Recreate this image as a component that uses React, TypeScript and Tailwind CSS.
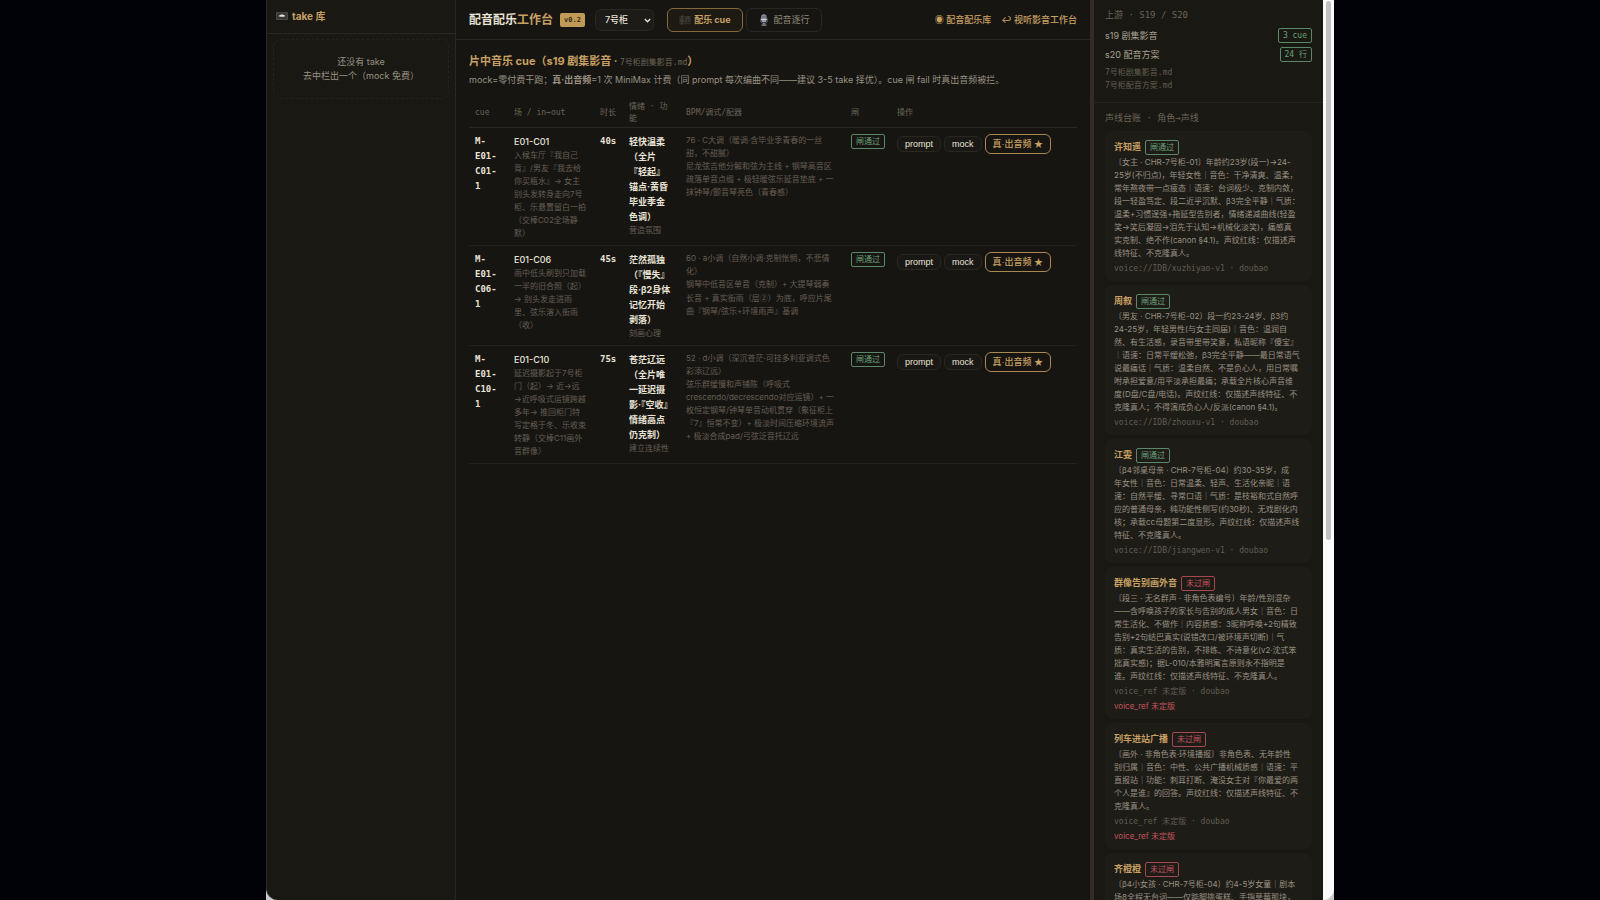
import type { ReactNode } from "react";
import clsx from "clsx";

const sans = "font-['Inter','Noto_Sans_CJK_SC',sans-serif]";
const mono = "font-['DejaVu_Sans_Mono','Noto_Sans_CJK_SC',monospace]";
const buttonFont = "font-['Liberation_Sans','Noto_Sans_CJK_SC',sans-serif]";

interface Cue {
  id: string;
  scene: string;
  inOut: string;
  duration: string;
  mood: string;
  purpose: string;
  music: string;
}

interface Voice {
  name: string;
  passed: boolean;
  desc: string;
  voiceRef: string | null;
}

const cues: Cue[] = [
  {
    id: "M-\nE01-\nC01-\n1",
    scene: "E01-C01",
    inOut: "入候车厅『我自己\n背』/男友『我去给\n你买瓶水』→ 女主\n别头发转身走向7号\n柜、乐悬置留白一拍\n（交棒C02全场静\n默）",
    duration: "40s",
    mood: "轻快温柔\n（全片\n『轻起』\n锚点·黄昏\n毕业季金\n色调）",
    purpose: "营造氛围",
    music:
      "76 · C大调（暖调·含毕业季青春的一丝\n甜，不甜腻）\n尼龙弦吉他分解和弦为主线 + 钢琴高音区\n疏落单音点缀 + 极轻暖弦乐延音垫底 + 一\n抹钟琴/颤音琴亮色（青春感）",
  },
  {
    id: "M-\nE01-\nC06-\n1",
    scene: "E01-C06",
    inOut: "雨中低头刷到只加载\n一半的旧合照（起）\n→ 别头发走进雨\n里、弦乐溶入街雨\n（收）",
    duration: "45s",
    mood: "茫然孤独\n（『慢失』\n段·β2身体\n记忆开始\n剥落）",
    purpose: "刻画心理",
    music:
      "60 · a小调（自然小调·克制怅惘，不悲情\n化）\n钢琴中低音区单音（克制）+ 大提琴弱奏\n长音 + 真实街雨（层②）为底，呼应片尾\n曲『钢琴/弦乐+环境雨声』基调",
  },
  {
    id: "M-\nE01-\nC10-\n1",
    scene: "E01-C10",
    inOut: "延迟摄影起于7号柜\n门（起）→ 近→远\n→近呼吸式运镜跨越\n多年→ 推回柜门特\n写定格于冬、乐收束\n转静（交棒C11画外\n音群像）",
    duration: "75s",
    mood: "苍茫辽远\n（全片唯\n一延迟摄\n影·『空收』\n情绪高点\n仍克制）",
    purpose: "建立连续性",
    music:
      "52 · d小调（深沉苍茫·可挂多利亚调式色\n彩添辽远）\n弦乐群缓慢和声铺陈（呼吸式\ncrescendo/decrescendo对应运镜）+ 一\n枚恒定钢琴/钟琴单音动机贯穿（象征柜上\n『7』恒常不变）+ 极淡时间压缩环境流声\n+ 极淡合成pad/弓弦泛音托辽远",
  },
];

const voices: Voice[] = [
  {
    name: "许知遥",
    passed: true,
    desc: "〔女主 · CHR-7号柜-01〕年龄约23岁(段一)→24-\n25岁(不归点)，年轻女性｜音色：干净清爽、温柔，\n常年熬夜带一点疲态｜语速：台词极少、克制内敛，\n段一轻盈笃定、段二近乎沉默、β3完全平静｜气质：\n温柔+习惯逞强+拖延型告别者，情绪递减曲线(轻盈\n笑→笑后凝固→泪先于认知→机械化淡笑)，痛感真\n实克制、绝不作(canon §4.1)。声纹红线：仅描述声\n线特征、不克隆真人。",
    voiceRef: "voice://IDB/xuzhiyao-v1",
  },
  {
    name: "周叙",
    passed: true,
    desc: "〔男友 · CHR-7号柜-02〕段一约23-24岁、β3约\n24-25岁，年轻男性(与女主同届)｜音色：温润自\n然、有生活感，录音带里带笑意，私语昵称『傻宝』\n｜语速：日常平缓松弛，β3完全平静——最日常语气\n说最痛话｜气质：温柔自然、不是负心人，用日常嘱\n咐承担爱意/用平淡承担最痛；承载全片核心声音维\n度(D盘/C盘/电话)。声纹红线：仅描述声线特征、不\n克隆真人；不得演成负心人/反派(canon §4.1)。",
    voiceRef: "voice://IDB/zhouxu-v1",
  },
  {
    name: "江雯",
    passed: true,
    desc: "〔β4邻桌母亲 · CHR-7号柜-04〕约30-35岁，成\n年女性｜音色：日常温柔、轻声、生活化亲昵｜语\n速：自然平缓、寻常口语｜气质：是枝裕和式自然呼\n应的普通母亲，纯功能性侧写(约30秒)、无戏剧化内\n核；承载cc母题第二度显形。声纹红线：仅描述声线\n特征、不克隆真人。",
    voiceRef: "voice://IDB/jiangwen-v1",
  },
  {
    name: "群像告别画外音",
    passed: false,
    desc: "〔段三 · 无名群声 · 非角色表编号〕年龄/性别混杂\n——含呼唤孩子的家长与告别的成人男女｜音色：日\n常生活化、不做作｜内容质感：3昵称呼唤+2句精致\n告别+2句结巴真实(说错改口/被环境声切断)｜气\n质：真实生活的告别，不排练、不诗意化(v2·沈式笨\n拙真实感)；据L-010/本雅明寓言原则永不指明是\n谁。声纹红线：仅描述声线特征、不克隆真人。",
    voiceRef: null,
  },
  {
    name: "列车进站广播",
    passed: false,
    desc: "〔画外 · 非角色表·环境播报〕非角色表、无年龄性\n别归属｜音色：中性、公共广播机械质感｜语速：平\n直报站｜功能：刺耳打断、淹没女主对『你最爱的两\n个人是谁』的回答。声纹红线：仅描述声线特征、不\n克隆真人。",
    voiceRef: null,
  },
  {
    name: "齐橙橙",
    passed: false,
    desc: "〔β4小女孩 · CHR-7号柜-04〕约4-5岁女童｜剧本\n场8全程无台词——仅踮脚挑蛋糕、手指草莓那块，",
    voiceRef: null,
  },
];

function Badge({ tone, className, children }: { tone: "ok" | "bad"; className?: string; children: ReactNode }) {
  return (
    <span
      className={clsx(
        "inline-block shrink-0 whitespace-nowrap rounded-xs border px-1 text-[8px] leading-[13px]",
        tone === "ok" ? "border-[#5a8767] text-[#6ba27a]" : "border-[#a5484f] text-[#c2545c]",
        className
      )}
    >
      {children}
    </span>
  );
}

function TapeIcon() {
  return (
    <svg className="h-3 w-3" viewBox="0 0 12 12" aria-hidden="true">
      <rect x="0" y="2" width="12" height="8" rx="0.8" fill="#4b4a47" />
      <rect x="0.8" y="2.7" width="10.4" height="6.4" fill="#383735" />
      <path d="M2.4 6l1.800-1 1-.6h1.600l1 .6 1.800 1-1.800.8H4.200z" fill="#e6e3dc" />
    </svg>
  );
}

function ScoreIcon() {
  return (
    <svg className="h-3 w-3" viewBox="0 0 12 12" fill="none" stroke="#4a4741" aria-hidden="true">
      <path d="M0 2.5h12M0 4.3h12M0 6.1h12M0 7.9h12M0 9.7h12" strokeWidth="0.5" />
      <path d="M3 10.6c-1.3 0-1.2-1.3-.4-1.3M3 10.6V2.2c0-1.4 1.3-1 .9.3C3.5 4 1.3 5 1.5 6.8c.2 1.6 3.2 1.5 3.1-.1-.1-1.2-1.9-1.1-1.9.1" strokeWidth="0.8" />
      <path d="M7 8.5V4l3-.8v4.6" strokeWidth="1" />
    </svg>
  );
}

function MicIcon() {
  return (
    <svg className="h-3 w-3" viewBox="0 0 12 12" aria-hidden="true">
      <path d="M2.7 4.5v2.2c0 4 6.600 4 6.600 0V4.5" fill="none" stroke="#5d6068" strokeWidth="1" />
      <rect x="3.2" y="0.2" width="5.400" height="8.2" rx="2.700" fill="#9aa0ac" />
      <path d="M4 2.4h4M3.500 3.900h4.900M5 .8v4M6.900 .8v4" stroke="#4f5665" strokeWidth="0.5" />
      <rect x="3.2" y="4.900" width="5.400" height="1" fill="#d3d7de" />
      <path d="M5.300 9h1.400v1.500h1.800v1.200h-5v-1.200h1.800z" fill="#878b94" />
    </svg>
  );
}

function TakeLibrary() {
  return (
    <aside className="w-[190px] shrink-0 rounded-bl-xl border-x border-[#2a2721] bg-[#191812]">
      <h2 className="flex h-[34px] items-center gap-1 border-b border-[#2a2721] px-[9px] pb-px text-[10px] font-bold text-[#c7a063]">
        <TapeIcon />
        take 库
      </h2>
      <div className="mx-[6px] mt-[5px] rounded-lg border border-dashed border-[#26231d] py-[15px] text-center text-[9px] leading-[14px] text-[#999285]">
        <p>还没有 take</p>
        <p>去中栏出一个（mock 免费）</p>
      </div>
    </aside>
  );
}

function TopBar() {
  return (
    <header className="flex h-10 items-center border-b border-[#2a2721] px-[13px]">
      <h1 className="text-[12px] font-bold whitespace-nowrap text-[#e9e3d6]">
        配音配乐<span className="text-[#c7a063]">工作台</span>
      </h1>
      <span className={clsx(mono, "ml-[7px] rounded-xs bg-[#c19a58] px-1 text-[7px] leading-[14px] font-bold text-[#3a2d17]")}>
        v0.2
      </span>
      <div className="relative ml-[10px]">
        <select
          aria-label="剧集"
          className="block h-[22px] w-[59px] appearance-none rounded-md border border-[#2a2721] bg-[#1d1b17] pl-[9px] text-[9px] font-medium text-[#e9e3d6]"
        >
          <option>7号柜</option>
        </select>
        <svg
          className="pointer-events-none absolute top-2 right-[3px] h-[7px] w-[7px]"
          viewBox="0 0 7 7"
          fill="none"
          stroke="#e9e3d6"
          strokeWidth="1.3"
          aria-hidden="true"
        >
          <path d="M0.8 2l2.7 2.8L6.2 2" />
        </svg>
      </div>
      <nav className="ml-[13px] flex gap-[3px] text-[9px]">
        <button className="flex h-6 w-[76px] items-center justify-center gap-[3px] rounded-md border border-[#84693c] bg-[#1d1a14] font-bold text-[#c7a063]">
          <ScoreIcon />
          配乐 cue
        </button>
        <button className="flex h-6 w-[76px] items-center justify-center gap-[3px] rounded-md border border-[#2a2721] text-[#8f8878]">
          <MicIcon />
          配音逐行
        </button>
      </nav>
      <div className="ml-auto flex gap-[10px] text-[9px] font-medium whitespace-nowrap text-[#c7a063]">
        <a href="#library">◉ 配音配乐库</a>
        <a href="#studio">↩ 视听影音工作台</a>
      </div>
    </header>
  );
}

// Inter draws circled digits larger than the text around them.
function MusicNote({ text }: { text: string }) {
  const [before, after] = text.split("②");
  if (after === undefined) return <>{text}</>;
  return (
    <>
      {before}
      <span className="font-['Noto_Sans_CJK_SC',sans-serif]">②</span>
      {after}
    </>
  );
}

function CueTable() {
  return (
    <table className="mt-[9px] w-full table-fixed border-collapse text-left">
      <colgroup>
        <col className="w-[39px]" />
        <col className="w-[86px]" />
        <col className="w-[29px]" />
        <col className="w-[57px]" />
        <col className="w-[165px]" />
        <col className="w-[46px]" />
        <col />
      </colgroup>
      <thead>
        <tr className={clsx(mono, "border-b border-[#2a2721] text-[8px] leading-3 text-[#6b6457] [&>th]:px-[6px] [&>th]:pt-1 [&>th]:pb-[2px] [&>th]:font-normal")}>
          <th scope="col">cue</th>
          <th scope="col" className="whitespace-nowrap">场 / in→out</th>
          <th scope="col" className="whitespace-nowrap">时长</th>
          <th scope="col" className="whitespace-pre">{"情绪 · 功\n能"}</th>
          <th scope="col">BPM/调式/配器</th>
          <th scope="col">闸</th>
          <th scope="col">操作</th>
        </tr>
      </thead>
      <tbody>
        {cues.map((cue) => (
          <tr
            key={cue.scene}
            className="border-b border-[#23211c] align-top text-[9px] leading-[15px] text-[#e9e3d6] [&>td]:px-[6px] [&>td]:pt-[6px] [&>td]:pb-[5px]"
          >
            <td className={clsx(mono, "font-bold whitespace-pre")}>{cue.id}</td>
            <td className="whitespace-pre">
              <div className="font-medium">{cue.scene}</div>
              <div className="text-[8px] leading-[13px] text-[#655e52]">{cue.inOut}</div>
            </td>
            <td className={clsx(mono, "font-bold")}>{cue.duration}</td>
            <td className="whitespace-pre">
              <div className="font-bold">{cue.mood}</div>
              <div className="text-[8px] leading-[13px] text-[#655e52]">{cue.purpose}</div>
            </td>
            <td className="text-[8px] leading-[13px] whitespace-pre text-[#655e52]">
              <MusicNote text={cue.music} />
            </td>
            <td>
              <Badge tone="ok" className="align-top">闸通过</Badge>
            </td>
            <td>
              <div className={clsx(buttonFont, "flex items-center gap-[3px] leading-[14px] whitespace-nowrap")}>
                <button className="rounded-md border border-[#2a2721] bg-[#1a1815] px-[7px]">prompt</button>
                <button className="rounded-md border border-[#2a2721] bg-[#1a1815] px-[7px]">mock</button>
                <button className="rounded-md border border-[#a98750] px-[7px] py-[2px] font-medium text-[#c7a063]">
                  真·出音频 ★
                </button>
              </div>
            </td>
          </tr>
        ))}
      </tbody>
    </table>
  );
}

function VoiceCard({ voice }: { voice: Voice }) {
  return (
    <li className="rounded-lg bg-[#1e1c17] px-[9px] pt-2 pb-[6px]">
      <div className="mb-px flex h-4 items-center gap-1">
        <h3 className="text-[9px] font-bold text-[#c7a063]">{voice.name}</h3>
        <Badge tone={voice.passed ? "ok" : "bad"}>{voice.passed ? "闸通过" : "未过闸"}</Badge>
      </div>
      <p className="text-[8px] leading-[13px] whitespace-pre text-[#999182]">{voice.desc}</p>
      <p className={clsx(mono, "mt-[2px] text-[8px] leading-[13px] text-[#625c51]")}>
        {voice.voiceRef ?? "voice_ref 未定版"} · doubao
      </p>
      {!voice.voiceRef && <p className="mt-px text-[8px] leading-[14px] text-[#c2545c]">voice_ref 未定版</p>}
    </li>
  );
}

function UpstreamPanel() {
  return (
    <aside className="w-[229px] shrink-0 overflow-hidden bg-[#191812]">
      <section className="border-b border-[#25231d] px-[11px] pt-2 pb-[10px]">
        <h2 className={clsx(mono, "text-[9px] leading-[14px] text-[#6b6457]")}>上游 · S19 / S20</h2>
        <div className="mt-1 flex h-[19px] items-center justify-between text-[9px] text-[#aaa292]">
          s19 剧集影音
          <Badge tone="ok" className={mono}>3 cue</Badge>
        </div>
        <div className="flex h-[19px] items-center justify-between text-[9px] text-[#aaa292]">
          s20 配音方案
          <Badge tone="ok" className={mono}>24 行</Badge>
        </div>
        <div className={clsx(mono, "mt-[2px] text-[8px] leading-[13px] text-[#625c51]")}>
          <p>7号柜剧集影音.md</p>
          <p>7号柜配音方案.md</p>
        </div>
      </section>
      <section className="px-[11px] pt-[8px]">
        <h2 className={clsx(mono, "text-[9px] leading-[14px] text-[#6b6457]")}>声线台账 · 角色→声线</h2>
        <ul className="mt-[6px] space-y-1">
          {voices.map((v) => (
            <VoiceCard key={v.name} voice={v} />
          ))}
        </ul>
      </section>
    </aside>
  );
}

export default function App() {
  return (
    <div className={clsx(sans, "flex h-screen justify-center overflow-hidden bg-[#010207]")}>
      <div className="flex w-full max-w-[1068px] bg-[#c9c9c9]">
        <TakeLibrary />
        <main className="min-w-0 flex-1 bg-[#171512]">
          <TopBar />
          <div className="px-[13px] pt-[14px]">
            <h2 className="text-[11px] leading-[15px] font-bold text-[#c7a063]">
              片中音乐 cue（s19 剧集影音 ·{" "}
              <span className={clsx(mono, "text-[8px] font-normal text-[#6b6457]")}>7号柜剧集影音.md</span>）
            </h2>
            <p className="mt-[2px] text-[9px] leading-[16px] text-[#999182]">
              mock=零付费干跑；<b>真·出音频</b>=1 次 MiniMax 计费（同 prompt 每次编曲不同——建议 3-5 take
              择优）。cue 闸 fail 时真出音频被拦。
            </p>
            <CueTable />
          </div>
        </main>
        <div className="w-1 shrink-0 bg-[#342a27]" />
        <UpstreamPanel />
        <div className="w-[11px] shrink-0 rounded-br-xl bg-[#fafafa] px-[3px] pt-px" aria-hidden="true">
          <div className="h-[60%] rounded-full bg-[#c1c1c1]" />
        </div>
      </div>
    </div>
  );
}
